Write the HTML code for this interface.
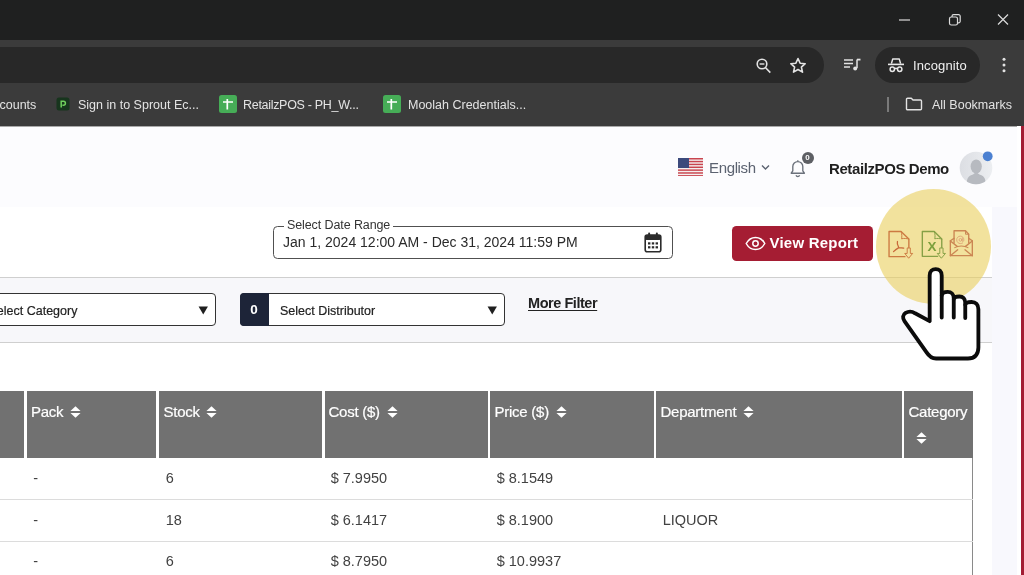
<!DOCTYPE html>
<html lang="en">
<head>
<meta charset="utf-8">
<title>RetailzPOS Report</title>
<style>
*{box-sizing:border-box;margin:0;padding:0}
html,body{width:1024px;height:575px;overflow:hidden}
html{background:linear-gradient(#1f2020 0,#1f2020 40px,#3b3b3b 40px,#3b3b3b 126.5px,#fff 126.5px,#fff 100%)}
#wrap{position:absolute;left:0;top:0;width:1024px;height:575px;overflow:hidden;filter:blur(.4px)}
body{position:relative;font-family:"Liberation Sans",Arial,sans-serif;color:#222}
.abs{position:absolute}
.t{position:absolute;white-space:nowrap;line-height:1}
/* browser chrome */
#titlebar{left:0;top:0;width:1024px;height:40px;background:#1f2020}
#toolbar{left:0;top:40px;width:1024px;height:50px;background:#3b3b3b}
#bmbar{left:0;top:90px;width:1024px;height:36px;background:#3b3b3b}
#omni{left:-40px;top:47px;width:864px;height:36px;border-radius:18px;background:#282828}
#incog{left:875px;top:47px;width:105px;height:36px;border-radius:18px;background:#282828}
.ch{color:#e3e3e3;font-size:12.5px;font-family:"Liberation Sans",sans-serif}
/* page */
#page{left:0;top:126px;width:1024px;height:449px;background:#fff}
#hdr{left:0;top:126px;width:1017px;height:81px;background:#fcfcfe;border-top:1px solid #a9a9a9}
#filter{left:0;top:277px;width:992px;height:65.5px;background:#f7f7fa;border-top:1px solid #cfcfcf;border-bottom:1px solid #cfcfcf}
#rside{left:992px;top:207px;width:24.5px;height:368px;background:#f8f8fd}
#redline{left:1021.3px;top:126px;width:3px;height:449px;background:#a31c33}
.sel{background:#fff;border:1.3px solid #333;border-radius:4px}
/* table */
#thead{left:0;top:391px;width:973px;height:67px;background:#717171}
.vd{position:absolute;top:391px;width:2.3px;height:67px;background:#fff;margin-left:-0.3px}
.hl{position:absolute;left:0;width:972.5px;height:1px;background:#dcdcdc}
.th{color:#fff;font-size:15px;letter-spacing:-0.25px;-webkit-text-stroke:0.2px #fff}
.td{color:#424242;font-size:14.5px;letter-spacing:0px}
</style>
</head>
<body>
<div id="wrap">
<!-- ===== Browser chrome ===== -->
<div id="titlebar" class="abs"></div>
<div id="toolbar" class="abs"></div>
<div id="bmbar" class="abs"></div>
<div id="omni" class="abs"></div>
<div id="incog" class="abs"></div>


<!-- window controls -->
<svg class="abs" style="left:879.6px;top:-0.4px" width="144" height="40" viewBox="0 0 144 40" fill="none" stroke="#dcdcdc" stroke-width="1.2">
  <line x1="19" y1="20" x2="30" y2="20"/>
  <rect x="69.5" y="17" width="8" height="8" rx="1.8"/>
  <path d="M72 17v-0.8a1.6 1.6 0 0 1 1.6-1.6h5a1.6 1.6 0 0 1 1.6 1.6v5a1.6 1.6 0 0 1-1.6 1.6h-1"/>
  <path d="M118 14.5l10 10M128 14.5l-10 10"/>
</svg>
<!-- omnibox icons -->
<svg class="abs" style="left:752px;top:54px" width="60" height="24" viewBox="0 0 60 24" fill="none" stroke="#e3e3e3" stroke-width="1.6">
  <circle cx="10" cy="10" r="4.8"/><line x1="13.6" y1="13.8" x2="18.3" y2="18.6"/><line x1="7.6" y1="10" x2="12.4" y2="10" stroke-width="1.4"/>
  <path d="M46 4.5l2.1 4.7 5.1.5-3.8 3.4 1.1 5-4.5-2.6-4.5 2.6 1.1-5-3.8-3.4 5.1-.5z" stroke-linejoin="round"/>
</svg>
<!-- media control icon -->
<svg class="abs" style="left:842px;top:55px" width="20" height="20" viewBox="0 0 20 20" fill="none" stroke="#e3e3e3" stroke-width="1.5">
  <line x1="2" y1="5" x2="11" y2="5"/><line x1="2" y1="8.5" x2="11" y2="8.5"/><line x1="2" y1="12" x2="8" y2="12"/>
  <path d="M15 4.5v8.5" /><path d="M15 4.6h3.5" stroke-width="1.8"/><circle cx="13.2" cy="13.4" r="2" fill="#e3e3e3" stroke="none"/>
</svg>
<!-- incognito -->
<svg class="abs" style="left:886px;top:55px" width="20" height="20" viewBox="0 0 20 20" fill="none" stroke="#e8e8e8" stroke-width="1.5">
  <path d="M5.4 8.6l1.300-4.500h6.600l1.300 4.500" stroke-linejoin="round"/>
  <line x1="2" y1="9.4" x2="18" y2="9.4" stroke-width="1.6"/>
  <circle cx="6.3" cy="14.3" r="2.2"/><circle cx="13.7" cy="14.3" r="2.2"/><path d="M8.5 13.8q1.5-.9 3 0"/>
</svg>
<div class="t ch" style="left:913px;top:58.5px;font-size:13px;color:#f0f0f0;letter-spacing:0.12px">Incognito</div>
<svg class="abs" style="left:1000px;top:55px" width="8" height="20" viewBox="0 0 8 20" fill="#e3e3e3"><circle cx="4" cy="4.2" r="1.5"/><circle cx="4" cy="10" r="1.5"/><circle cx="4" cy="15.8" r="1.5"/></svg>

<!-- bookmarks bar -->
<div class="t ch" style="left:-0.5px;top:98.8px">counts</div>
<svg class="abs" style="left:56px;top:97px" width="14" height="14" viewBox="0 0 14 14"><rect x="0.5" y="0.5" width="13" height="13" rx="2.5" fill="#17351d"/><path d="M5.2 10.5V4.2h2.2a2 2 0 0 1 0 4H6.4" fill="none" stroke="#6fcf5d" stroke-width="1.5"/></svg>
<div class="t ch" style="left:78px;top:98.8px">Sign in to Sprout Ec...</div>
<svg class="abs" style="left:219px;top:95px" width="18" height="18" viewBox="0 0 18 18"><rect x="0" y="0" width="18" height="18" rx="2.5" fill="#46ad57"/><path d="M4 7h10M8.3 4v10.5" stroke="#fff" stroke-width="1.7" fill="none"/></svg>
<div class="t ch" style="left:243px;top:98.8px;letter-spacing:-0.3px">RetailzPOS - PH_W...</div>
<svg class="abs" style="left:383px;top:95px" width="18" height="18" viewBox="0 0 18 18"><rect x="0" y="0" width="18" height="18" rx="2.5" fill="#46ad57"/><path d="M4 7h10M8.3 4v10.5" stroke="#fff" stroke-width="1.7" fill="none"/></svg>
<div class="t ch" style="left:408px;top:98.8px">Moolah Credentials...</div>
<div class="abs" style="left:887.3px;top:96.8px;width:1.3px;height:15.5px;background:#7a7a7a"></div>
<svg class="abs" style="left:905px;top:96px" width="18" height="16" viewBox="0 0 18 16" fill="none" stroke="#e3e3e3" stroke-width="1.4"><path d="M1.5 3.2a1 1 0 0 1 1-1h3.8l1.7 1.8h7.5a1 1 0 0 1 1 1v7.8a1 1 0 0 1-1 1h-13a1 1 0 0 1-1-1z" stroke-linejoin="round"/></svg>
<div class="t ch" style="left:932px;top:98.8px">All Bookmarks</div>

<!-- ===== Page ===== -->
<div id="page" class="abs"></div>
<div id="hdr" class="abs"></div>
<div id="rside" class="abs"></div>
<div id="filter" class="abs"></div>
<div id="redline" class="abs"></div>


<!-- header row -->
<svg class="abs" style="left:678px;top:157.5px" width="25" height="18.5" viewBox="0 0 25 18.5">
  <rect width="25" height="18.5" fill="#f4f0f0"/>
  <g fill="#c9454f"><rect y="0" width="25" height="1.5"/><rect y="2.85" width="25" height="1.45"/><rect y="5.7" width="25" height="1.45"/><rect y="8.55" width="25" height="1.45"/><rect y="11.4" width="25" height="1.45"/><rect y="14.25" width="25" height="1.45"/><rect y="17.1" width="25" height="1.4"/></g>
  <rect width="11" height="10" fill="#3c4a7c"/>
</svg>
<div class="t" style="left:709px;top:159.5px;font-size:15px;color:#5b6270;letter-spacing:-0.35px">English</div>
<svg class="abs" style="left:761px;top:164px" width="9" height="7" viewBox="0 0 9 7" fill="none" stroke="#5b6270" stroke-width="1.4"><path d="M1 1.5l3.5 3.5 3.5-3.5"/></svg>
<svg class="abs" style="left:788px;top:157px" width="20" height="22" viewBox="0 0 20 22" fill="none" stroke="#6b717b" stroke-width="1.35">
  <path d="M3.2 16.2h13.2l-1.6-2.4V9.6a5 5 0 0 0-10 0v4.2z" stroke-linejoin="round"/><path d="M8 18.2a1.9 1.9 0 0 0 3.6 0"/><path d="M9.8 4.5V3.2"/>
</svg>
<div class="abs" style="left:801.5px;top:151.5px;width:12.5px;height:12.5px;border-radius:50%;background:#5d5f64"></div>
<div class="t" style="left:805.3px;top:154.2px;font-size:8px;font-weight:bold;color:#fff">0</div>
<div class="t" style="left:829px;top:160.5px;font-size:15px;font-weight:bold;color:#1f1f1f;letter-spacing:-0.4px">RetailzPOS Demo</div>
<svg class="abs" style="left:958px;top:150px" width="36" height="36" viewBox="0 0 36 36">
  <defs><clipPath id="avc"><circle cx="18" cy="18" r="16.300"/></clipPath>
  <linearGradient id="avg" x1="0" y1="0" x2="1" y2="0"><stop offset="0" stop-color="#dcdee3"/><stop offset="1" stop-color="#eceef1"/></linearGradient></defs>
  <circle cx="18" cy="18" r="16.300" fill="url(#avg)"/>
  <g clip-path="url(#avc)" fill="#b7bac0"><ellipse cx="18.200" cy="16.500" rx="5.600" ry="7"/><path d="M8.500 36c0-8.500 2.500-10.500 6.500-11.500l3.200-2.500 3.200 2.500c4 1 6.500 3 6.500 11.500z"/></g>
  <circle cx="29.700" cy="6.300" r="4.900" fill="#4b80d1"/>
</svg>


<!-- date range -->
<div class="abs" style="left:273px;top:226.4px;width:400px;height:32.4px;border:1.8px solid #505050;border-radius:4.5px;background:#fff"></div>
<div class="abs" style="left:284px;top:224px;width:109px;height:5px;background:#fff"></div>
<div class="t" style="left:287px;top:218.8px;font-size:12.5px;color:#333;letter-spacing:-0.1px">Select Date Range</div>
<div class="t" style="left:283px;top:234.6px;font-size:14px;color:#2a2a2a;letter-spacing:0px">Jan 1, 2024 12:00 AM - Dec 31, 2024 11:59 PM</div>
<svg class="abs" style="left:644px;top:231.5px" width="18" height="21" viewBox="0 0 18 21">
  <rect x="1.2" y="3" width="15.6" height="16.8" rx="2" fill="#fff" stroke="#2b2b2b" stroke-width="1.6"/>
  <rect x="1.2" y="3" width="15.6" height="5" rx="1.5" fill="#2b2b2b"/>
  <rect x="4.2" y="0.6" width="1.9" height="4" rx=".8" fill="#2b2b2b"/><rect x="11.9" y="0.6" width="1.9" height="4" rx=".8" fill="#2b2b2b"/>
  <g fill="#2b2b2b"><rect x="4" y="10.3" width="2.4" height="2.2"/><rect x="7.8" y="10.3" width="2.4" height="2.2"/><rect x="11.6" y="10.3" width="2.4" height="2.2"/><rect x="4" y="14.2" width="2.4" height="2.2"/><rect x="7.8" y="14.2" width="2.4" height="2.2"/><rect x="11.6" y="14.2" width="2.4" height="2.2"/></g>
</svg>
<!-- view report -->
<div class="abs" style="left:731.5px;top:226.4px;width:141.500px;height:34.300px;border-radius:4.5px;background:#a51d33"></div>
<svg class="abs" style="left:745px;top:234.5px" width="21" height="17" viewBox="0 0 21 17" fill="none" stroke="#fff" stroke-width="1.5">
  <path d="M1.2 8.500C3.500 4.300 6.800 2.400 10.500 2.400s7 1.900 9.300 6.100c-2.300 4.200-5.600 6.100-9.300 6.100S3.500 12.700 1.200 8.500z" stroke-linejoin="round"/><circle cx="10.500" cy="8.500" r="2.700"/>
</svg>
<div class="t" style="left:769.5px;top:235.2px;font-size:15px;font-weight:bold;color:#fff;letter-spacing:0.22px">View Report</div>
<!-- highlight circle -->
<div class="abs" style="left:876.2px;top:188.6px;width:115px;height:115px;border-radius:50%;background:rgba(234,206,92,.6)"></div>


<!-- filter bar -->
<div class="abs sel" style="left:-120px;top:293.2px;width:335.500px;height:32.400px"></div>
<div class="t" style="left:-11.5px;top:304.800px;font-size:12.500px;color:#222;letter-spacing:0px;-webkit-text-stroke:0.2px #222">Select Category</div>
<svg class="abs" style="left:198.3px;top:305.5px" width="10.5" height="9" viewBox="0 0 12 11"><path d="M0.300 0.500h11.400L6 10.500z" fill="#1f1f1f"/></svg>
<div class="abs sel" style="left:239.500px;top:293.200px;width:265px;height:32.400px"></div>
<div class="abs" style="left:239.500px;top:293.200px;width:29.500px;height:32.400px;background:#1d2438;border-radius:4px 0 0 4px"></div>
<div class="t" style="left:250.2px;top:302.8px;font-size:13.5px;font-weight:bold;color:#fff">0</div>
<div class="t" style="left:280px;top:304.800px;font-size:12.500px;color:#222;letter-spacing:0px;-webkit-text-stroke:0.2px #222">Select Distributor</div>
<svg class="abs" style="left:487.3px;top:305.5px" width="10.5" height="9" viewBox="0 0 12 11"><path d="M0.300 0.500h11.400L6 10.500z" fill="#1f1f1f"/></svg>
<div class="t" style="left:528px;top:295.500px;font-size:14.500px;font-weight:bold;color:#222;letter-spacing:-0.450px;text-decoration:underline;text-underline-offset:2px">More Filter</div>


<!-- export icons -->
<svg class="abs" style="left:882px;top:222px" width="100" height="44.040" viewBox="0 0 1024 451" fill="none" stroke-linejoin="round" stroke-linecap="round">
  <g stroke="#cc7a42" stroke-width="14">
    <path d="M235 355H72V97H195L275 175V262"/>
    <path d="M195 97C205 125 205 150 200 172C225 165 250 168 275 175" stroke-width="10"/>
    <path d="M258 270V322H233L273 371L314 322H290V270z" stroke-width="10"/>
  </g>
  <g stroke="#c8683a" stroke-width="13">
    <path d="M158 200C150 225 165 250 172 262C150 275 130 290 118 303M172 262C190 262 205 262 222 268"/>
  </g>
  <g stroke="#86a046" stroke-width="14">
    <path d="M570 352H413V97H535L612 175V262"/>
    <path d="M535 97C545 125 545 150 540 172C565 165 590 168 612 175" stroke-width="10"/>
    <path d="M592 270V322H566L608 371L650 322H625V270z" stroke-width="10"/>
  </g>
  <text x="513" y="293" font-family="Liberation Sans, sans-serif" font-size="138" font-weight="bold" fill="#7c9f3c" stroke="none" text-anchor="middle">X</text>
  <g stroke="#cb8653" stroke-width="14">
    <path d="M738 215V90H855L888 125V215"/>
    <path d="M855 90V125H888" stroke-width="10"/>
    <path d="M738 168L700 192V345H925V192L888 168"/>
    <path d="M700 195L770 250M925 195L855 250"/>
    <path d="M700 345L775 285M925 345L850 285"/>
    <path d="M745 262C775 240 850 240 880 262" stroke-width="11"/>
  </g>
  <g stroke="#dba173" stroke-width="9">
    <circle cx="803" cy="183" r="14"/><path d="M822 165V192C822 205 838 203 838 183C838 160 822 145 803 145C780 145 765 162 765 183C765 205 782 221 803 221C812 221 820 219 826 215"/>
  </g>
</svg>
<!-- hand cursor -->
<svg class="abs" style="left:895px;top:260px" width="100" height="104.930" viewBox="0 0 548 575" stroke="#0b0b0b" stroke-width="21" stroke-linejoin="round" stroke-linecap="round">
  <path fill="#fff" d="M190 335L190 85C190 62 205 50 223 50C241 50 256 62 256 85L256 195C258 182 272 175 289 175C308 175 322 188 322 210L322 215C324 205 338 200 353 200C372 200 385 213 385 235L385 245C387 235 402 230 420 230C442 230 457 245 457 270L457 480C457 520 435 540 400 540L225 540C200 540 185 525 172 505L52 335C40 318 42 300 58 290C75 280 95 282 110 292Z"/>
  <path fill="none" d="M256 195V315M322 215V315M385 245V318"/>
</svg>

<!-- table -->
<div id="thead" class="abs"></div>
<div class="vd" style="left:24.500px"></div><div class="vd" style="left:156.500px"></div><div class="vd" style="left:322.500px"></div><div class="vd" style="left:488px"></div><div class="vd" style="left:654px"></div><div class="vd" style="left:902px"></div>
<div class="abs" style="left:972px;top:458px;width:1.200px;height:117px;background:#8a8a8a"></div>
<div class="hl" style="top:499.300px"></div><div class="hl" style="top:540.800px"></div>
<div class="t th" style="left:31px;top:404px">Pack</div><svg class="abs" style="left:69.5px;top:405.5px" width="11" height="12" viewBox="0 0 10 13" preserveAspectRatio="none" fill="#fff"><path d="M5 0.300L9.600 5.400H0.400z"/><path d="M5 12.700L9.600 7.600H0.400z"/></svg>
<div class="t th" style="left:163.500px;top:404px">Stock</div><svg class="abs" style="left:206px;top:405.5px" width="11" height="12" viewBox="0 0 10 13" preserveAspectRatio="none" fill="#fff"><path d="M5 0.300L9.600 5.400H0.400z"/><path d="M5 12.700L9.600 7.600H0.400z"/></svg>
<div class="t th" style="left:328.500px;top:404px">Cost ($)</div><svg class="abs" style="left:387px;top:405.5px" width="11" height="12" viewBox="0 0 10 13" preserveAspectRatio="none" fill="#fff"><path d="M5 0.300L9.600 5.400H0.400z"/><path d="M5 12.700L9.600 7.600H0.400z"/></svg>
<div class="t th" style="left:494.500px;top:404px">Price ($)</div><svg class="abs" style="left:555.5px;top:405.5px" width="11" height="12" viewBox="0 0 10 13" preserveAspectRatio="none" fill="#fff"><path d="M5 0.300L9.600 5.400H0.400z"/><path d="M5 12.700L9.600 7.600H0.400z"/></svg>
<div class="t th" style="left:660.500px;top:404px">Department</div><svg class="abs" style="left:742.5px;top:405.5px" width="11" height="12" viewBox="0 0 10 13" preserveAspectRatio="none" fill="#fff"><path d="M5 0.300L9.600 5.400H0.400z"/><path d="M5 12.700L9.600 7.600H0.400z"/></svg>
<div class="t th" style="left:908.500px;top:404px">Category</div><svg class="abs" style="left:915.5px;top:432.0px" width="11" height="12" viewBox="0 0 10 13" preserveAspectRatio="none" fill="#fff"><path d="M5 0.300L9.600 5.400H0.400z"/><path d="M5 12.700L9.600 7.600H0.400z"/></svg>
<div class="t td" style="left:33.2px;top:471px">-</div><div class="t td" style="left:33.2px;top:513px">-</div><div class="t td" style="left:33.2px;top:553.9px">-</div>
<div class="t td" style="left:165.7px;top:471px">6</div><div class="t td" style="left:165.7px;top:513px">18</div><div class="t td" style="left:165.7px;top:553.9px">6</div>
<div class="t td" style="left:330.7px;top:471px">$ 7.9950</div><div class="t td" style="left:330.7px;top:513px">$ 6.1417</div><div class="t td" style="left:330.7px;top:553.9px">$ 8.7950</div>
<div class="t td" style="left:496.7px;top:471px">$ 8.1549</div><div class="t td" style="left:496.7px;top:513px">$ 8.1900</div><div class="t td" style="left:496.7px;top:553.9px">$ 10.9937</div>
<div class="t td" style="left:662.7px;top:513px">LIQUOR</div>


</div>
</body>
</html>
